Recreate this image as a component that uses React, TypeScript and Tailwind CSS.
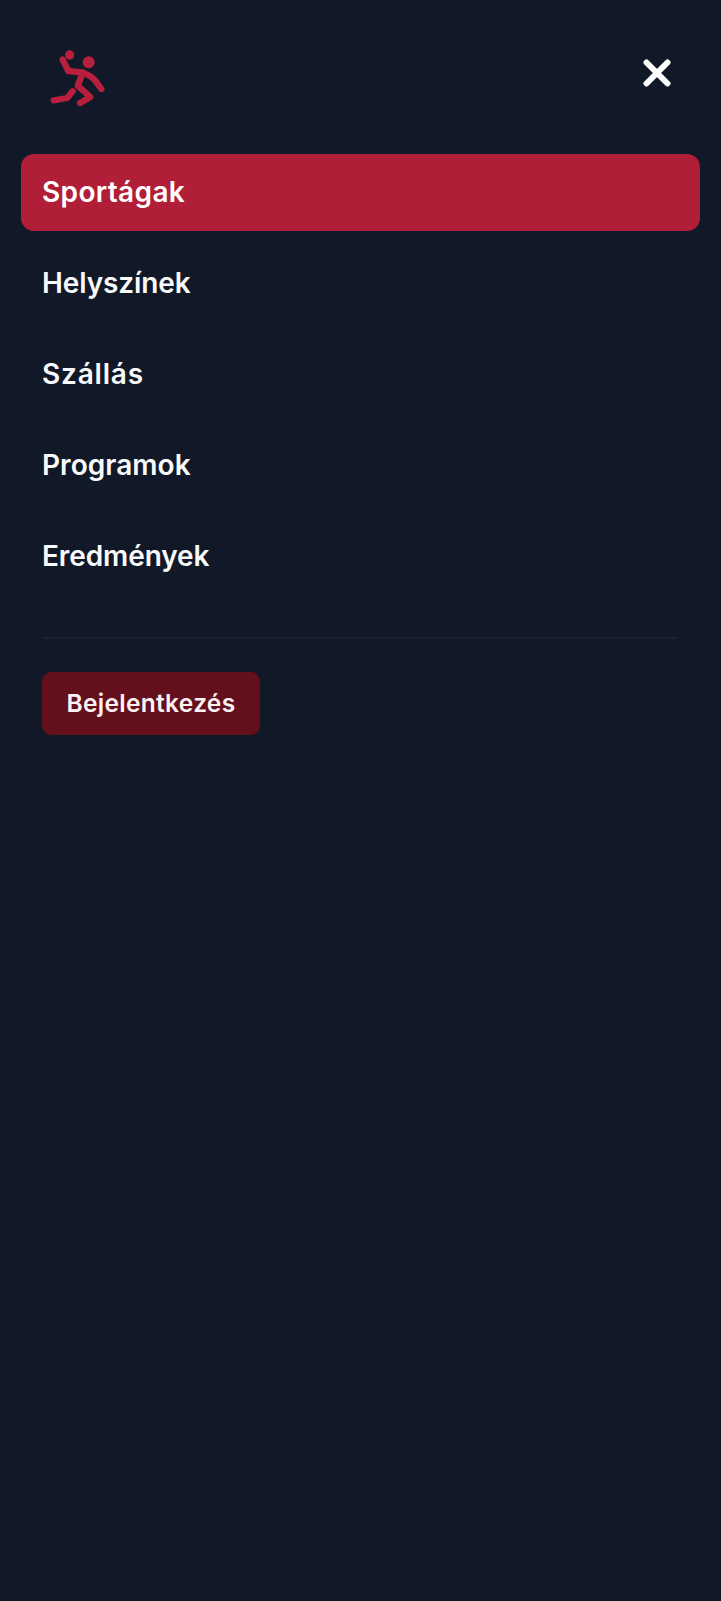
type NavItem = { label: string; spacing: string; active?: boolean };

const items: NavItem[] = [
  { label: "Sportágak", spacing: "tracking-[0.35px]", active: true },
  { label: "Helyszínek", spacing: "tracking-[-0.12px]" },
  { label: "Szállás", spacing: "tracking-[0.8px]" },
  { label: "Programok", spacing: "tracking-[0.05px]" },
  { label: "Eredmények", spacing: "tracking-[-0.1px]" },
];

function HandballIcon() {
  return (
    <svg viewBox="0 0 240 240" className="size-20" fill="none" stroke="#b81f3c" strokeWidth="19" strokeLinecap="round" strokeLinejoin="round">
      <circle cx="146" cy="67" r="18" fill="#b81f3c" stroke="none" />
      <circle cx="89" cy="45" r="14" fill="#b81f3c" stroke="none" />
      <path d="M68 59L85 93L129 98Q154 108 165 121L184 147" />
      <path d="M129 98L113 137L151 171L120 189" />
      <path d="M41 181L82 174L98 154" />
    </svg>
  );
}

function CloseIcon() {
  return (
    <svg viewBox="0 0 28 28" className="size-7" fill="none" stroke="white" strokeWidth="6" strokeLinecap="round">
      <path d="M3.5 3.5L24.5 24.5M24.5 3.5L3.5 24.5" />
    </svg>
  );
}

export default function App() {
  return (
    <div className="flex h-[1601px] w-[721px] flex-col bg-[#111827] px-[21px] pt-10 font-['Inter',sans-serif] font-semibold text-[#f9fafb]">
      <header className="flex h-[114px] items-start justify-between pl-[19px] pr-[28px]">
        <HandballIcon />
        <button type="button" aria-label="Bezárás" className="mr-px mt-[19px]">
          <CloseIcon />
        </button>
      </header>
      <nav className="flex flex-col gap-[14px]">
        {items.map((item) => (
          <a
            key={item.label}
            href="#"
            className={`flex h-[77px] items-center rounded-[13px] pl-[21px] pb-px text-[28px] leading-none ${item.spacing} ${item.active ? "bg-[#b01e38] text-white" : ""}`}
          >
            {item.label}
          </a>
        ))}
      </nav>
      <div className="ml-[23px] mr-[24px] mt-[42px] h-[2px] bg-[#1a2130]" />
      <button type="button" className="ml-[21px] mt-[33px] flex h-[63px] w-[218px] items-center justify-center rounded-[9px] bg-[#630f1c] text-[24.5px] leading-none tracking-[0.3px] text-[#fdf2f2]">
        Bejelentkezés
      </button>
    </div>
  );
}
